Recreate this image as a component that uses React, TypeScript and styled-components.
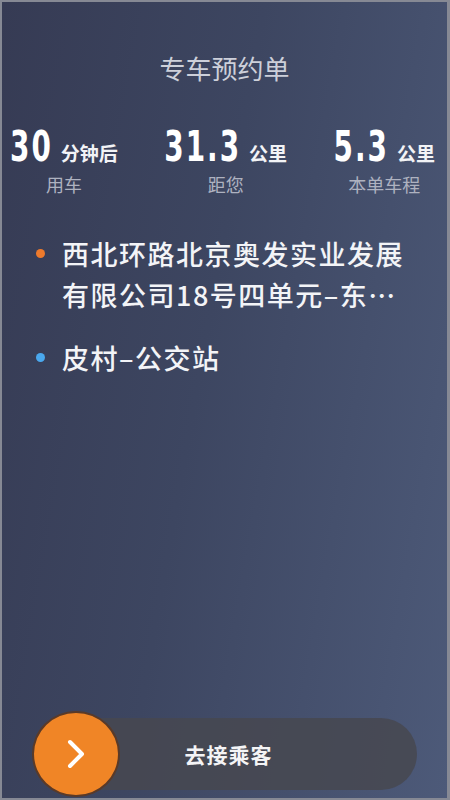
import React from "react";
import styled, { createGlobalStyle } from "styled-components";

const GlobalStyle = createGlobalStyle`
  html, body {
    margin: 0;
    padding: 0;
    background: #868994;
  }
  * {
    box-sizing: border-box;
  }
`;

const Screen = styled.div`
  width: 450px;
  height: 800px;
  padding: 2px 3px 2px 2px;
  background: #868994;
`;

const Panel = styled.main`
  height: 100%;
  display: flex;
  flex-direction: column;
  background: linear-gradient(100deg, #363b54 0%, #3d4661 45%, #4d5a79 100%);
  font-family: "Noto Sans CJK SC", "Noto Sans", sans-serif;
  color: #ffffff;
`;

const Title = styled.h1`
  margin: 48px 0 0;
  text-align: center;
  font-size: 26px;
  font-weight: 400;
  line-height: 36px;
  color: #cdd0da;
`;

const Stats = styled.div`
  display: flex;
  justify-content: space-between;
  padding: 0 12px 0 8px;
  margin-top: 48px;
`;

const Stat = styled.div`
  display: flex;
  flex-direction: column;
  align-items: center;
`;

const ValueRow = styled.div`
  display: flex;
  align-items: baseline;
  gap: 8px;
`;

/* the digits are drawn tall and narrow, as in the app's condensed face */
const Number = styled.span`
  display: inline-block;
  font-family: "DejaVu Sans Condensed", "DejaVu Sans", sans-serif;
  font-stretch: condensed;
  font-weight: 700;
  font-size: 31px;
  line-height: 32px;
  letter-spacing: 2px;
  color: #ffffff;
  transform: scaleY(1.4);
  transform-origin: 50% 85%;
`;

const Unit = styled.span`
  font-size: 19px;
  font-weight: 700;
  color: #f2f3f6;
`;

const Caption = styled.div`
  margin-top: 6px;
  font-size: 18px;
  line-height: 24px;
  color: #aeb2c0;
`;

const Places = styled.ul`
  list-style: none;
  margin: 37px 0 0;
  padding: 0 24px 0 60px;
  display: flex;
  flex-direction: column;
  gap: 22px;
`;

const Place = styled.li<{ $dot: string }>`
  position: relative;
  font-size: 27px;
  font-weight: 500;
  line-height: 41px;
  letter-spacing: 1.5px;
  color: #f3f4f7;

  &::before {
    content: "";
    position: absolute;
    left: -26px;
    top: 16px;
    width: 9px;
    height: 9px;
    border-radius: 50%;
    background: ${(p) => p.$dot};
  }
`;

const Footer = styled.div`
  margin-top: auto;
  padding: 0 30px 0 28px;
  height: 88px;
  display: flex;
  align-items: center;
`;

const SlideTrack = styled.div`
  position: relative;
  flex: 1;
  height: 72px;
  margin-left: 14px;
  border-radius: 36px;
  background: rgba(70, 72, 80, 0.85);
  display: flex;
  align-items: center;
  justify-content: center;
`;

const TrackLabel = styled.span`
  font-size: 21px;
  font-weight: 700;
  letter-spacing: 1px;
  color: #f4f4f6;
  margin-left: -4px;
`;

const Knob = styled.button`
  position: absolute;
  left: -12px;
  top: 50%;
  transform: translateY(-50%);
  width: 88px;
  height: 86px;
  border-radius: 50%;
  border: 2px solid #5a3a28;
  background: #f08526;
  display: flex;
  align-items: center;
  justify-content: center;
  padding: 0;
  cursor: pointer;
`;

export default function App() {
  return (
    <>
      <GlobalStyle />
      <Screen>
        <Panel>
          <Title>专车预约单</Title>

          <Stats>
            <Stat>
              <ValueRow>
                <Number>30</Number>
                <Unit>分钟后</Unit>
              </ValueRow>
              <Caption>用车</Caption>
            </Stat>
            <Stat>
              <ValueRow>
                <Number>31.3</Number>
                <Unit>公里</Unit>
              </ValueRow>
              <Caption>距您</Caption>
            </Stat>
            <Stat>
              <ValueRow>
                <Number>5.3</Number>
                <Unit>公里</Unit>
              </ValueRow>
              <Caption>本单车程</Caption>
            </Stat>
          </Stats>

          <Places>
            <Place $dot="#ee7a2c">西北环路北京奥发实业发展有限公司18号四单元–东…</Place>
            <Place $dot="#4aa8ee">皮村–公交站</Place>
          </Places>

          <Footer>
            <SlideTrack>
              <Knob aria-label="去接乘客">
                <svg width="30" height="34" viewBox="0 0 30 34" fill="none">
                  <path
                    d="M9 5 L21 17 L9 29"
                    stroke="#ffffff"
                    strokeWidth="4"
                    strokeLinecap="round"
                    strokeLinejoin="round"
                  />
                </svg>
              </Knob>
              <TrackLabel>去接乘客</TrackLabel>
            </SlideTrack>
          </Footer>
        </Panel>
      </Screen>
    </>
  );
}
